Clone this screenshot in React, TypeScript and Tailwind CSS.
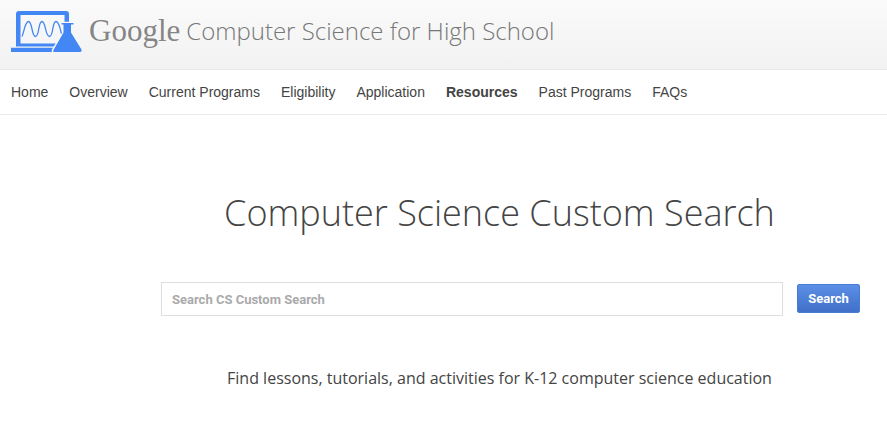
import { useState } from "react";

const NAV_ITEMS = [
  "Home",
  "Overview",
  "Current Programs",
  "Eligibility",
  "Application",
  "Resources",
  "Past Programs",
  "FAQs",
];

export default function App() {
  return (
    <div className="bg-white font-['Liberation_Sans',Arial,sans-serif] text-[#444]">
      <Header />
      <Nav active="Resources" />
      <main className="pt-[70px] pb-10 pr-[27px] pl-[161px]">
        <h1 className="mr-[22px] text-center font-['Open_Sans',sans-serif] text-[36px] leading-[56px] font-light whitespace-nowrap">
          Computer Science Custom Search
        </h1>
        <SearchForm />
        <p className="mt-[50px] mr-[22px] text-center font-['Open_Sans',sans-serif] text-[16px] leading-6 whitespace-nowrap">
          Find lessons, tutorials, and activities for K-12 computer science
          education
        </p>
      </main>
    </div>
  );
}

function Header() {
  return (
    <header className="flex h-[70px] items-center border-b border-[#e8e8e8] bg-linear-to-b from-[#fafafa] to-[#f2f2f2] px-[11px] pb-[7px]">
      <a href="#home" className="flex items-center whitespace-nowrap">
        <LabLogo />
        <span className="ml-[7px] font-['Liberation_Serif',serif] text-[31px] leading-10 text-[#858585]">
          Google
        </span>
        <span className="ml-[6px] font-['Open_Sans',sans-serif] text-[24px] leading-10 font-light text-[#777]">
          Computer Science for High School
        </span>
      </a>
    </header>
  );
}

// Laptop with a sine wave and a flask in front of it
function LabLogo() {
  return (
    <svg width="71" height="41" viewBox="0 0 71 41" aria-hidden="true">
      <path
        d="M5 35.500V3Q5 0 8 0H55Q58 0 58 3V35.500ZM9.500 32.500H53.500V4H9.500Z"
        fill="#4387f5"
        fillRule="evenodd"
      />
      <path d="M0 36.700H45V41H0Z" fill="#4387f5" />
      <path
        d="M11 25.500C13.500 20 14 10.500 17.500 10.500C21.500 10.500 20.500 25.500 24.500 25.500C28.500 25.500 27 10.500 31 10.500C35 10.500 34 25.500 38.500 25.500C42.500 25.500 41 10.500 45 10.500C48.500 10.500 49 19 51 24"
        fill="none"
        stroke="#4387f5"
        strokeWidth="1.300"
      />
      <path
        d="M50.500 12H62.500V13.500H60V21.500L71 39V41H42V39L52.500 21.500V13.500H50.500Z"
        fill="#4387f5"
        stroke="#f8f8f8"
        strokeWidth="2.400"
      />
      <path
        d="M50.500 12H62.500V13.500H60V21.500L70.500 38.500Q71 41 69 41H43.500Q41.500 41 42.500 39L52.500 21.500V13.500H50.500Z"
        fill="#4387f5"
      />
    </svg>
  );
}

function Nav({ active }: { active: string }) {
  return (
    <nav className="border-b border-[#ebebeb] px-[11px]">
      <ul className="flex h-11 items-center gap-[21px] text-[14px] leading-5 whitespace-nowrap">
        {NAV_ITEMS.map((item) => (
          <li key={item}>
            <a
              href={`#${item.toLowerCase().replace(" ", "-")}`}
              className={item === active ? "font-bold" : ""}
            >
              {item}
            </a>
          </li>
        ))}
      </ul>
    </nav>
  );
}

function SearchForm() {
  const [query, setQuery] = useState("");

  return (
    <form
      onSubmit={(e) => e.preventDefault()}
      className="mt-[41px] flex items-center gap-[14px]"
    >
      <input
        type="text"
        aria-label="Search CS Custom Search"
        placeholder="Search CS Custom Search"
        value={query}
        onChange={(e) => setQuery(e.target.value)}
        className="h-[34px] min-w-0 flex-1 border border-[#dedede] px-[10px] font-[Roboto,sans-serif] text-[13px] font-bold placeholder:text-[#aaa]"
      />
      <button
        type="submit"
        className="mb-px h-[29px] w-[63px] rounded-xs border border-[#4a7cd4] bg-linear-to-b from-[#5c8fe6] to-[#4070c8] font-[Roboto,sans-serif] text-[13px] font-bold text-white"
      >
        Search
      </button>
    </form>
  );
}
